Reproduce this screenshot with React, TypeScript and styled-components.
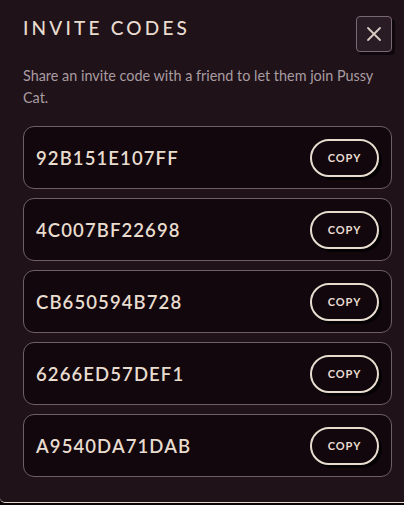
import React from "react";
import styled, { createGlobalStyle } from "styled-components";

const GlobalStyle = createGlobalStyle`
  html, body {
    margin: 0;
    padding: 0;
    background: #0b0508;
  }
  body {
    font-family: "Lato", "Noto Sans", sans-serif;
  }
`;

const Modal = styled.div`
  box-sizing: border-box;
  width: 404px;
  height: 503px;
  background: #1f1219;
  border-bottom: 1px solid #e8dccf;
  border-bottom-left-radius: 5px;
  padding: 14px 12px 0 23px;
  display: flex;
  flex-direction: column;
`;

const Header = styled.div`
  display: flex;
  justify-content: space-between;
  align-items: flex-start;
`;

const Title = styled.h1`
  margin: 2px 0 0;
  font-size: 19px;
  font-weight: 500;
  letter-spacing: 3.2px;
  color: #e8dccf;
`;

const CloseButton = styled.button`
  box-sizing: border-box;
  width: 36px;
  height: 36px;
  margin-top: 2px;
  padding: 0;
  display: flex;
  align-items: center;
  justify-content: center;
  background: #2a1c24;
  border: 1px solid #7a6a70;
  border-radius: 4px;
  box-shadow: 3px 3px 0 #0e070b;
  color: #d9cdc3;
  cursor: pointer;
`;

const Description = styled.p`
  margin: 13px 0 0 0;
  max-width: 362px;
  font-size: 14.4px;
  line-height: 22px;
  color: #a99ca1;
`;

const List = styled.div`
  margin-top: 17px;
  display: flex;
  flex-direction: column;
  gap: 9px;
`;

const Card = styled.div`
  box-sizing: border-box;
  height: 63px;
  display: flex;
  align-items: center;
  justify-content: space-between;
  padding: 0 12px 0 12px;
  background: #12070d;
  border: 1px solid #6e5e65;
  border-radius: 11px;
`;

const Code = styled.span`
  font-size: 18.5px;
  font-weight: 600;
  letter-spacing: 1.1px;
  color: #e8dccf;
`;

const CopyButton = styled.button`
  box-sizing: border-box;
  width: 69px;
  height: 38px;
  border: 2px solid #e8dccf;
  border-radius: 19px;
  background: transparent;
  color: #e8dccf;
  font-family: inherit;
  font-size: 11px;
  font-weight: 700;
  letter-spacing: 1px;
  box-shadow: 3px 3px 0 #050204;
  cursor: pointer;
`;

const codes = [
  "92B151E107FF",
  "4C007BF22698",
  "CB650594B728",
  "6266ED57DEF1",
  "A9540DA71DAB",
];

export default function App() {
  return (
    <>
      <GlobalStyle />
      <Modal>
        <Header>
          <Title>INVITE CODES</Title>
          <CloseButton aria-label="Close">
            <svg width="16" height="16" viewBox="0 0 16 16">
              <path
                d="M2 2 L14 14 M14 2 L2 14"
                stroke="currentColor"
                strokeWidth="1.8"
                strokeLinecap="round"
              />
            </svg>
          </CloseButton>
        </Header>
        <Description>
          Share an invite code with a friend to let them join Pussy Cat.
        </Description>
        <List>
          {codes.map((c) => (
            <Card key={c}>
              <Code>{c}</Code>
              <CopyButton>COPY</CopyButton>
            </Card>
          ))}
        </List>
      </Modal>
    </>
  );
}
